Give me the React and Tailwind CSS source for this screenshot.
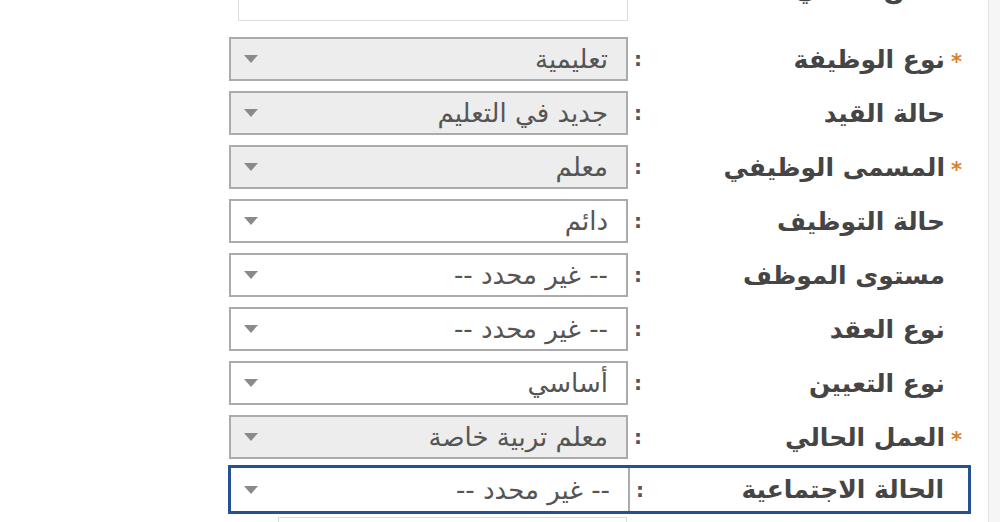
import React from 'react';

const rows = [
  { label: 'نوع الوظيفة', value: 'تعليمية', required: true, disabled: true },
  { label: 'حالة القيد', value: 'جديد في التعليم', disabled: true },
  { label: 'المسمى الوظيفي', value: 'معلم', required: true, disabled: true },
  { label: 'حالة التوظيف', value: 'دائم' },
  { label: 'مستوى الموظف', value: '-- غير محدد --' },
  { label: 'نوع العقد', value: '-- غير محدد --' },
  { label: 'نوع التعيين', value: 'أساسي' },
  { label: 'العمل الحالي', value: 'معلم تربية خاصة', required: true, disabled: true },
];

const Arrow = () => (
  <svg width="14" height="8" viewBox="0 0 14 8" className="shrink-0">
    <path d="M0 0 L14 0 L7 8 Z" fill="#8a8a8a" />
  </svg>
);

const Label = ({ text, required }) => (
  <div className="flex-1 flex items-center justify-end">
    <span dir="rtl" className="text-[25px] font-bold text-[#454545] leading-none">{text}</span>
    <span className="w-[24px] pl-[6px] text-[21px] font-bold text-[#d9822b] leading-none self-start mt-[6px]">
      {required ? '*' : ''}
    </span>
  </div>
);

const Colon = () => (
  <div className="w-[20px] text-center text-[20px] font-bold text-[#555] leading-none">:</div>
);

const Select = ({ value, disabled, className = '' }) => (
  <div
    className={`w-[399px] h-full flex items-center justify-between pl-[13px] pr-[18px] ${
      disabled ? 'bg-[#ededed]' : 'bg-white'
    } ${className}`}
  >
    <Arrow />
    <span dir="rtl" className="text-[26px] text-[#555] leading-none">{value}</span>
  </div>
);

export default function App() {
  return (
    <div className="flex w-[1000px] h-[522px] overflow-hidden bg-white" style={{ fontFamily: '"DejaVu Sans", sans-serif' }}>
      <div className="w-[988px] h-full flex flex-col pl-[229px]">
        {/* previous field, mostly scrolled off */}
        <div className="flex h-[70px] mt-[-49px] shrink-0">
          <div className="w-[399px] h-full pl-[9px]">
            <div className="w-full h-full border border-[#dcdcdc] bg-white" />
          </div>
          <div className="w-[20px]" />
          <div className="flex-1 flex items-end justify-end pb-[19px] pr-[24px]">
            <span dir="rtl" className="text-[25px] font-bold text-[#454545] leading-none">السكن الحالي</span>
          </div>
        </div>

        {rows.map((r, i) => (
          <div key={i} className={`flex items-center h-[44px] w-[740px] shrink-0 ${i === 0 ? 'mt-[16px]' : 'mt-[10px]'}`}>
            <Select value={r.value} disabled={r.disabled} className="border-2 border-[#ababab]" />
            <Colon />
            <Label text={r.label} required={r.required} />
          </div>
        ))}

        {/* focused row */}
        <div className="flex items-center h-[49px] w-[743px] ml-[-1px] mt-[6px] border-[3px] border-[#22528f] shrink-0">
          <Select value="-- غير محدد --" className="w-[396px] border-r-2 border-[#ababab] pl-[11px]" />
          <Colon />
          <Label text="الحالة الاجتماعية" />
        </div>

        <div className="ml-[49px] w-[349px] h-[40px] mt-[3px] border border-[#dcdcdc] shrink-0" />
      </div>
      <div className="flex-1 h-full bg-[#f6f6f6] border-l border-[#e4e4e4]" />
    </div>
  );
}
